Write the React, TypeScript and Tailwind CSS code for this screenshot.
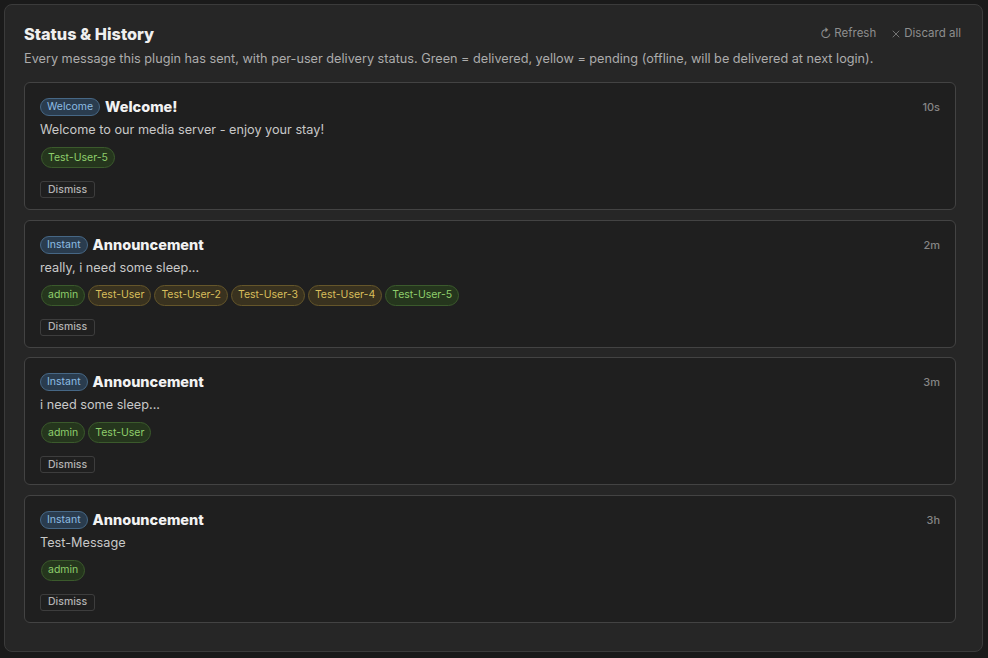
import { X } from "lucide-react";

type Recipient = { name: string; delivered: boolean };

type SentMessage = {
  id: string;
  kind: "Welcome" | "Instant";
  title: string;
  body: string;
  age: string;
  recipients: Recipient[];
};

const messages: SentMessage[] = [
  {
    id: "m1",
    kind: "Welcome",
    title: "Welcome!",
    body: "Welcome to our media server - enjoy your stay!",
    age: "10s",
    recipients: [{ name: "Test-User-5", delivered: true }],
  },
  {
    id: "m2",
    kind: "Instant",
    title: "Announcement",
    body: "really, i need some sleep...",
    age: "2m",
    recipients: [
      { name: "admin", delivered: true },
      { name: "Test-User", delivered: false },
      { name: "Test-User-2", delivered: false },
      { name: "Test-User-3", delivered: false },
      { name: "Test-User-4", delivered: false },
      { name: "Test-User-5", delivered: true },
    ],
  },
  {
    id: "m3",
    kind: "Instant",
    title: "Announcement",
    body: "i need some sleep...",
    age: "3m",
    recipients: [
      { name: "admin", delivered: true },
      { name: "Test-User", delivered: true },
    ],
  },
  {
    id: "m4",
    kind: "Instant",
    title: "Announcement",
    body: "Test-Message",
    age: "3h",
    recipients: [{ name: "admin", delivered: true }],
  },
];

function RecipientChip({ recipient }: { recipient: Recipient }) {
  return (
    <span
      className={
        recipient.delivered
          ? "flex h-[21px] items-center rounded-full border border-[#3b5a2c] bg-[#25361d] px-[6px] text-[10.5px] text-[#8fce6c]"
          : "flex h-[21px] items-center rounded-full border border-[#65562a] bg-[#39321f] px-[6px] text-[10.5px] text-[#d8bf5c]"
      }
    >
      {recipient.name}
    </span>
  );
}

function MessageCard({ message }: { message: SentMessage }) {
  return (
    <article className="flex h-[128px] flex-col rounded-md border border-[#434343] bg-[#1f1f1f] px-[15px] pt-[14px]">
      <div className="flex items-start justify-between">
        <div className="flex items-center gap-[5px]">
          <span className="flex h-[18px] items-center rounded-full border border-[#466785] bg-[#2a3c4e] px-[6px] text-[10.5px] text-[#8dbde3]">
            {message.kind}
          </span>
          <h3 className="text-[14.5px] font-extrabold leading-5 text-[#f2f2f2]">
            {message.title}
          </h3>
        </div>
        <span className="pt-[2px] text-[11px] font-medium text-[#858585]">
          {message.age}
        </span>
      </div>
      <p className="mt-[4px] text-[12.7px] leading-[18px] text-[#c8c8c8]">
        {message.body}
      </p>
      <div className="mt-[8px] flex flex-wrap gap-[3px] pl-[1px]">
        {message.recipients.map((r) => (
          <RecipientChip key={r.name} recipient={r} />
        ))}
      </div>
      <div className="mt-[13px] flex">
        <button
          type="button"
          className="flex h-[17px] items-center rounded-[3px] border border-[#3d3d3d] px-[7px] text-[10.5px] font-medium text-[#b3b3b3]"
        >
          Dismiss
        </button>
      </div>
    </article>
  );
}

export default function App() {
  return (
    <div
      className="h-[658px] w-[988px] bg-[#1a1a1a] p-[4px]"
      style={{ fontFamily: "Inter, 'Noto Sans', sans-serif" }}
    >
      <section className="h-[648px] w-[979px] rounded-lg border border-[#3b3b3b] bg-[#262626] pl-[19px] pr-[20px] pt-[18px]">
        <div className="flex items-center justify-between">
          <h2 className="text-[16.3px] font-extrabold leading-[22px] text-[#efefef]">
            Status &amp; History
          </h2>
          <div className="flex items-center gap-[14px] pr-[1px] text-[11.5px] text-[#8e8e8e]">
            <button type="button" className="flex items-center gap-[3px]">
              <span className="text-[12px] leading-none">↻</span>
              Refresh
            </button>
            <button type="button" className="flex items-center gap-[2px]">
              <X className="h-[12px] w-[12px]" strokeWidth={1.5} />
              Discard all
            </button>
          </div>
        </div>
        <p className="mt-[5px] text-[12.7px] leading-[18px] text-[#acacac]">
          Every message this plugin has sent, with per-user delivery status. Green = delivered,
          yellow = pending (offline, will be delivered at next login).
        </p>
        <div className="mr-[6px] mt-[14px] flex flex-col gap-[9.5px]">
          {messages.map((m) => (
            <MessageCard key={m.id} message={m} />
          ))}
        </div>
      </section>
    </div>
  );
}
